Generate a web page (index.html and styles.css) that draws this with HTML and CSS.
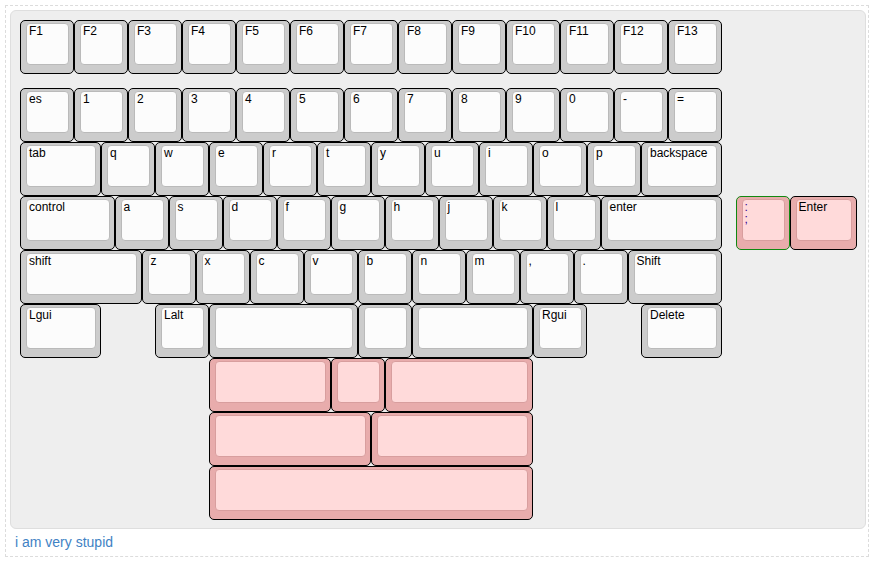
FILE: index.html
```html
<!DOCTYPE html>
<html lang="en">
<head>
    <meta charset="UTF-8">
    <meta name="viewport" content="width=device-width, initial-scale=1.0">
    <title>Keyboard Layout</title>
    <link rel="stylesheet" href="styles.css">
</head>
<body>
    <div class="wrapper">
        <div id="keyboard" class="keyboard">
            <!-- keys are generated from the layout below -->
        </div>
        <div class="notes">i am very stupid</div>
    </div>
    <script>
        // layout in key units, KLE style: objects set props for the next key
        const layout = [
            ["F1", "F2", "F3", "F4", "F5", "F6", "F7", "F8", "F9", "F10", "F11", "F12", "F13"],
            [{y: 0.25}, "es", "1", "2", "3", "4", "5", "6", "7", "8", "9", "0", "-", "="],
            [{w: 1.5}, "tab", "q", "w", "e", "r", "t", "y", "u", "i", "o", "p", {w: 1.5}, "backspace"],
            [{w: 1.75}, "control", "a", "s", "d", "f", "g", "h", "j", "k", "l", {w: 2.25}, "enter",
                {x: 0.25, c: "pink", b: "green"}, ":\n;", {c: "pink", w: 1.25}, "Enter"],
            [{w: 2.25}, "shift", "z", "x", "c", "v", "b", "n", "m", ",", ".", {w: 1.75}, "Shift"],
            [{w: 1.5}, "Lgui", {x: 1}, "Lalt", {w: 2.75}, "", "", {w: 2.25}, "", "Rgui", {x: 1, w: 1.5}, "Delete"],
            [{x: 3.5, c: "pink", w: 2.25}, "", {c: "pink"}, "", {c: "pink", w: 2.75}, ""],
            [{x: 3.5, c: "pink", w: 3}, "", {c: "pink", w: 3}, ""],
            [{x: 3.5, c: "pink", w: 6}, ""]
        ];

        const UNIT = 4; // grid cells per key unit

        function buildKeyboard() {
            const board = document.getElementById('keyboard');
            let y = 0;

            layout.forEach(row => {
                let x = 0;
                let props = {};

                row.forEach(item => {
                    if (typeof item === 'object') {
                        if (item.y) y += item.y;
                        props = item;
                        return;
                    }
                    if (props.x) x += props.x;
                    const w = props.w || 1;

                    const key = document.createElement('div');
                    key.className = 'key';
                    if (props.c) key.classList.add('key-' + props.c);
                    if (props.b) key.classList.add('border-' + props.b);
                    key.style.gridColumn = (x * UNIT + 1) + ' / span ' + (w * UNIT);
                    key.style.gridRow = (y * UNIT + 1) + ' / span ' + UNIT;

                    const top = document.createElement('div');
                    top.className = 'keytop';
                    top.textContent = item;
                    key.appendChild(top);
                    board.appendChild(key);

                    x += w;
                    props = {};
                });
                y += 1;
            });
        }

        buildKeyboard();
    </script>
</body>
</html>
```

FILE: styles.css
```css
body {
    margin: 0;
    font-family: "Liberation Sans", Arial, sans-serif;
    background-color: #fff;
    color: #000;
}
.wrapper {
    margin: 5px 4px 5px 5px;
    padding: 4px 4px 4px 4px;
    border: 1px dashed #dcdcdc;
}
.keyboard {
    display: grid;
    width: max-content;
    grid-template-columns: repeat(62, 13.5px);
    grid-template-rows: repeat(37, 13.5px);
    padding: 9px 8px 8px 9px;
    background-color: #eeeeee;
    border: 1px solid #dedede;
    border-radius: 6px;
}
.key {
    box-sizing: border-box;
    display: flex;
    padding: 2px 4px 8px 5px;
    background-color: #cccccc;
    border: 1px solid #000;
    border-radius: 5px;
}
.keytop {
    flex: 1;
    box-sizing: border-box;
    padding: 0 2px;
    background-color: #fcfcfc;
    border: 1px solid #bababa;
    border-radius: 4px;
    font-size: 12px;
    line-height: 14px;
    white-space: pre;
    overflow: hidden;
}
.key-pink {
    background-color: #e8acac;
}
.key-pink .keytop {
    background-color: #ffdada;
    border-color: #d89e9e;
}
.border-green {
    border-color: #118811;
}
.border-green .keytop {
    padding-top: 1px;
    line-height: 12px;
    color: #300090;
}
.notes {
    margin-top: 3px;
    padding-left: 5px;
    font-size: 14px;
    line-height: 20px;
    color: #3f82c4;
}
```
